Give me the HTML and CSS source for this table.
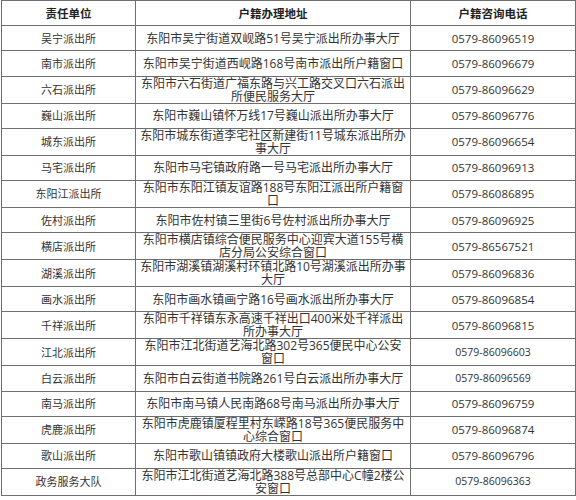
FILE: index.html
```html
<!DOCTYPE html>
<html lang="zh-CN">
<head>
<meta charset="utf-8">
<title>户籍办理地址</title>
<link rel="stylesheet" href="styles.css">
</head>
<body>
<table class="grid">
  <colgroup>
    <col class="c-unit">
    <col class="c-addr">
    <col class="c-tel">
  </colgroup>
  <thead>
    <tr><th>责任单位</th><th>户籍办理地址</th><th>户籍咨询电话</th></tr>
  </thead>
  <tbody>
    <tr><td>吴宁派出所</td><td class="addr">东阳市吴宁街道双岘路51号吴宁派出所办事大厅</td><td>0579-86096519</td></tr>
    <tr><td>南市派出所</td><td class="addr">东阳市吴宁街道西岘路168号南市派出所户籍窗口</td><td>0579-86096679</td></tr>
    <tr><td>六石派出所</td><td class="addr">东阳市六石街道广福东路与兴工路交叉口六石派出所便民服务大厅</td><td>0579-86096629</td></tr>
    <tr><td>巍山派出所</td><td class="addr">东阳市巍山镇怀万线17号巍山派出所办事大厅</td><td>0579-86096776</td></tr>
    <tr><td>城东派出所</td><td class="addr">东阳市城东街道李宅社区新建街11号城东派出所办事大厅</td><td>0579-86096654</td></tr>
    <tr><td>马宅派出所</td><td class="addr">东阳市马宅镇政府路一号马宅派出所办事大厅</td><td>0579-86096913</td></tr>
    <tr><td>东阳江派出所</td><td class="addr">东阳市东阳江镇友谊路188号东阳江派出所户籍窗口</td><td>0579-86086895</td></tr>
    <tr><td>佐村派出所</td><td class="addr">东阳市佐村镇三里街6号佐村派出所办事大厅</td><td>0579-86096925</td></tr>
    <tr><td>横店派出所</td><td class="addr">东阳市横店镇综合便民服务中心迎宾大道155号横店分局公安综合窗口</td><td>0579-86567521</td></tr>
    <tr><td>湖溪派出所</td><td class="addr">东阳市湖溪镇湖溪村环镇北路10号湖溪派出所办事大厅</td><td>0579-86096836</td></tr>
    <tr><td>画水派出所</td><td class="addr">东阳市画水镇画宁路16号画水派出所办事大厅</td><td>0579-86096854</td></tr>
    <tr><td>千祥派出所</td><td class="addr">东阳市千祥镇东永高速千祥出口400米处千祥派出所办事大厅</td><td>0579-86096815</td></tr>
    <tr><td>江北派出所</td><td class="addr">东阳市江北街道艺海北路302号365便民中心公安窗口</td><td class="small">0579-86096603</td></tr>
    <tr><td>白云派出所</td><td class="addr">东阳市白云街道书院路261号白云派出所办事大厅</td><td class="small">0579-86096569</td></tr>
    <tr><td>南马派出所</td><td class="addr">东阳市南马镇人民南路68号南马派出所办事大厅</td><td>0579-86096759</td></tr>
    <tr><td>虎鹿派出所</td><td class="addr">东阳市虎鹿镇厦程里村东嵘路18号365便民服务中心综合窗口</td><td>0579-86096874</td></tr>
    <tr><td>歌山派出所</td><td class="addr">东阳市歌山镇镇政府大楼歌山派出所户籍窗口</td><td>0579-86096796</td></tr>
    <tr><td>政务服务大队</td><td class="addr">东阳市江北街道艺海北路388号总部中心C幢2楼公安窗口</td><td class="small">0579-86096363</td></tr>
  </tbody>
</table>
</body>
</html>
```

FILE: styles.css
```css
html, body {
  margin: 0;
  padding: 0;
  background: #ffffff;
}

.grid {
  margin-left: 1px;
  width: 574px;
  border-collapse: collapse;
  table-layout: fixed;
  font-family: "Open Sans", "Noto Sans CJK SC", sans-serif;
  font-size: 11px;
  line-height: 13px;
  color: #333333;
}

.c-unit { width: 134px; }
.c-addr { width: 275px; }
.c-tel { width: 165px; }

.grid th,
.grid td {
  border: 1px solid #6f6f6f;
  height: 25.2px;
  padding: 0 4px;
  text-align: center;
  vertical-align: middle;
  box-sizing: border-box;
}

.grid th {
  font-weight: bold;
  color: #222222;
  font-size: 11.5px;
}

.grid td:last-child {
  font-size: 11.5px;
}

.grid td.small {
  font-size: 10.5px;
}

.grid td.addr {
  padding: 0 3px;
  font-size: 12px;
}
```
